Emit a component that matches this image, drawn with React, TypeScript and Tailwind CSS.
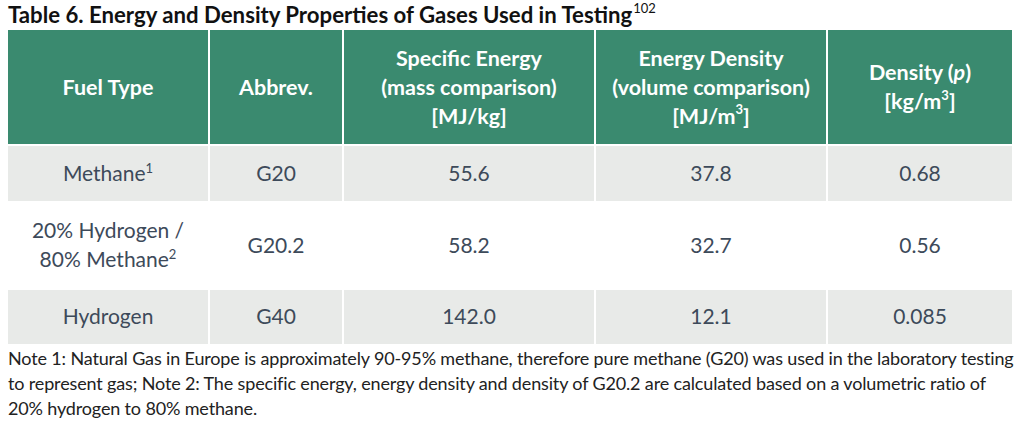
export default function App() {
  const sup = "text-[13px] top-[-0.6em]";
  const rows = [
    { fuel: <>Methane<sup className={sup}>1</sup></>, abbr: "G20", se: "55.6", ed: "37.8", d: "0.68", shade: true, h: "h-[57px]" },
    {
      fuel: (
        <>
          20% Hydrogen /<br />
          80% Methane<sup className={sup}>2</sup>
        </>
      ),
      abbr: "G20.2",
      se: "58.2",
      ed: "32.7",
      d: "0.56",
      shade: false,
      h: "h-[87px]",
    },
    { fuel: "Hydrogen", abbr: "G40", se: "142.0", ed: "12.1", d: "0.085", shade: true, h: "h-[56px]" },
  ];

  const cols = "grid grid-cols-[202px_134px_252px_232px_184px]";
  const cell = "flex items-center justify-center text-center";

  return (
    <main className="w-[1029px] h-[421px] bg-white px-2 pt-[1px] font-['Lato',sans-serif]">
      {/* Title */}
      <h1 className="text-[22.2px] font-bold text-[#111] leading-[28px]">
        Table 6. Energy and Density Properties of Gases Used in Testing
        <sup className="text-[13px] font-normal top-[-0.75em] ml-[1px]">102</sup>
      </h1>

      {/* Table */}
      <div className="w-[1004px] mt-[1px]">
        <div className={`${cols} h-[114px] bg-[#3a8a6f] text-white font-bold text-[21.5px] leading-[29px]`}>
          <div className={`${cell} border-r-2 border-white`}>
            <div>Fuel Type</div>
          </div>
          <div className={`${cell} border-r-2 border-white`}>
            <div>Abbrev.</div>
          </div>
          <div className={`${cell} border-r-2 border-white`}>
            <div>
              Specific Energy
              <br />
              (mass comparison)
              <br />
              [MJ/kg]
            </div>
          </div>
          <div className={`${cell} border-r-2 border-white`}>
            <div>
              Energy Density
              <br />
              (volume comparison)
              <br />
              [MJ/m<sup className="text-[13px] top-[-0.7em]">3</sup>]
            </div>
          </div>
          <div className={cell}>
            <div>
              Density (<i>p</i>)
              <br />
              [kg/m<sup className="text-[13px] top-[-0.7em]">3</sup>]
            </div>
          </div>
        </div>

        {rows.map((r, i) => (
          <div
            key={i}
            className={`${cols} ${r.h} ${r.shade ? "bg-[#e8eae8]" : "bg-white"} text-[#3d4a5a] text-[21px] leading-[29px] border-t-2 border-white`}
          >
            <div className={`${cell} border-r-2 border-white pb-[3px]`}>
              <div>{r.fuel}</div>
            </div>
            <div className={`${cell} border-r-2 border-white pb-[3px]`}>{r.abbr}</div>
            <div className={`${cell} border-r-2 border-white pb-[3px]`}>{r.se}</div>
            <div className={`${cell} border-r-2 border-white pb-[3px]`}>{r.ed}</div>
            <div className={`${cell} pb-[3px]`}>{r.d}</div>
          </div>
        ))}
      </div>

      {/* Notes */}
      <p className="mt-[2px] text-[18px] leading-[25px] text-[#222] tracking-[-0.15px]">
        Note 1: Natural Gas in Europe is approximately 90-95% methane, therefore pure methane (G20) was used in the laboratory testing
        <br />
        to represent gas; Note 2: The specific energy, energy density and density of G20.2 are calculated based on a volumetric ratio of
        <br />
        20% hydrogen to 80% methane.
      </p>
    </main>
  );
}
